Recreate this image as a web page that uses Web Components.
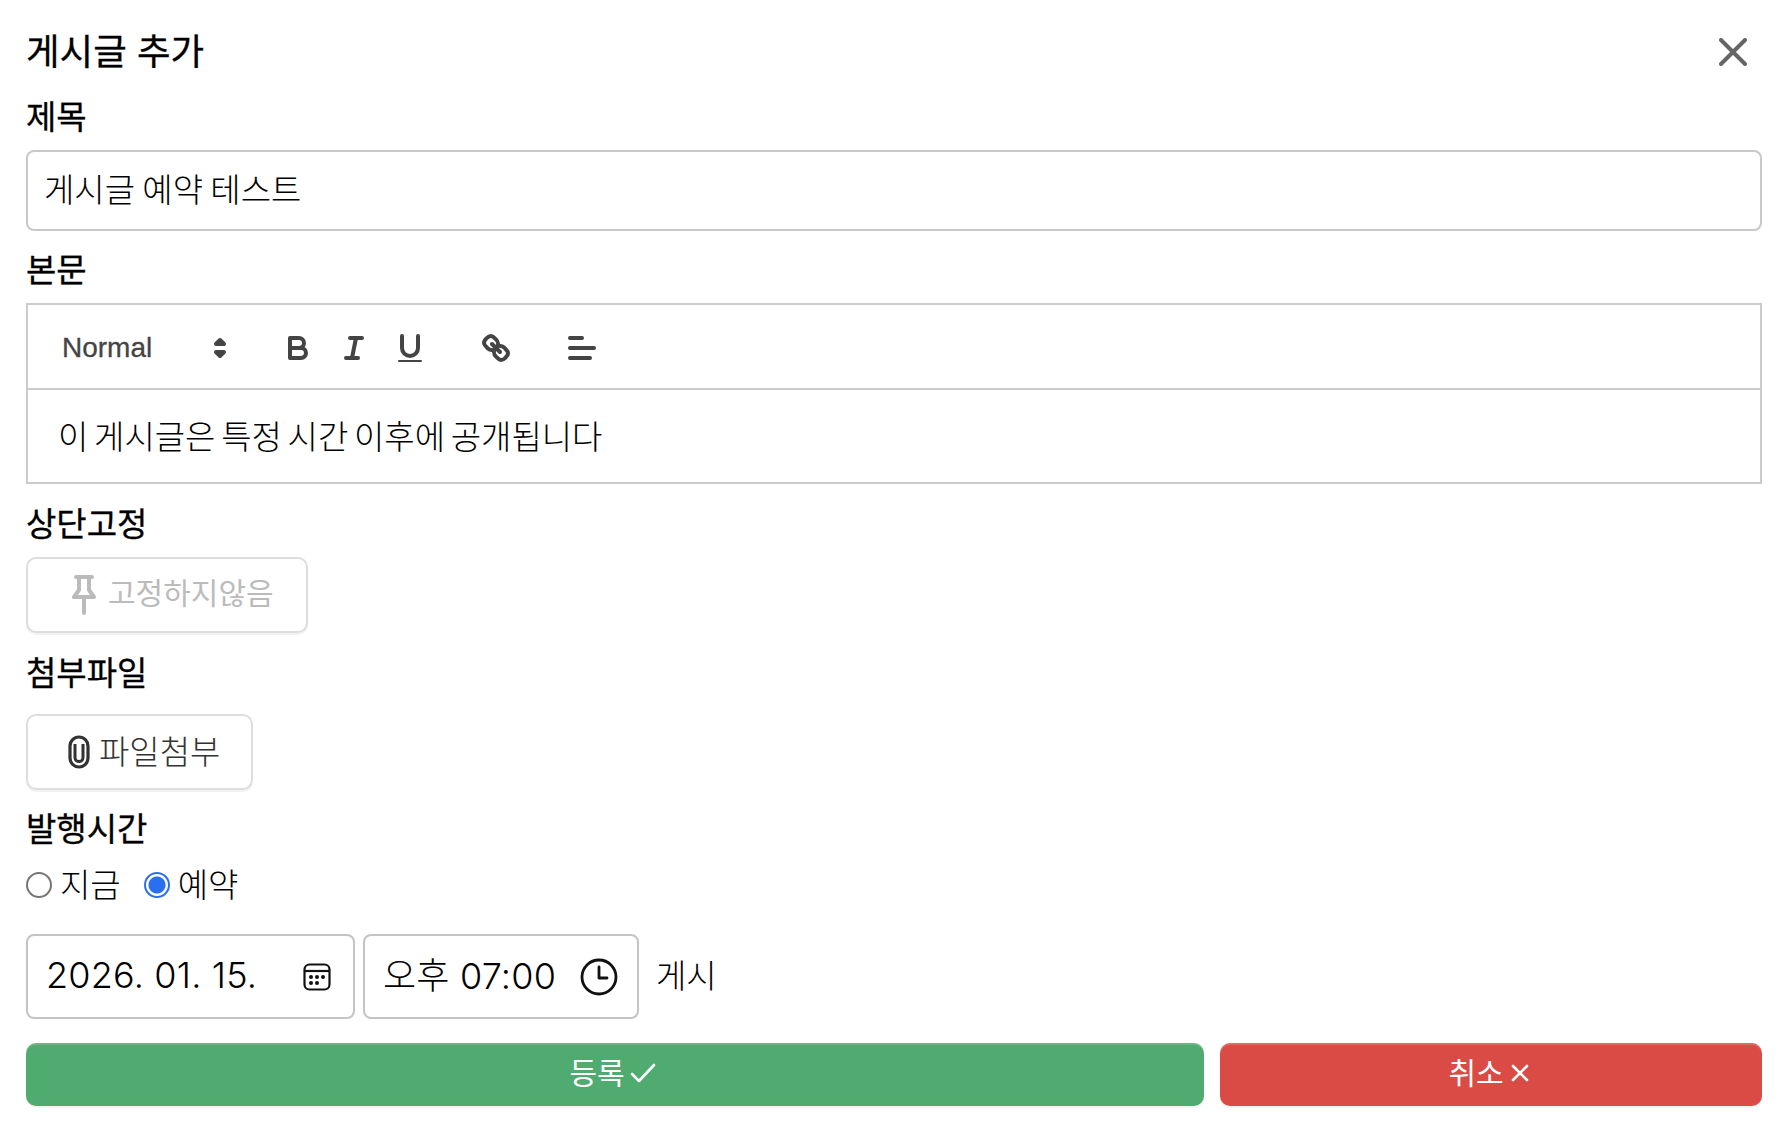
<!DOCTYPE html>
<html lang="ko">
<head>
<meta charset="utf-8">
<title>게시글 추가</title>
<style>
    html, body{ margin: 0; background: #fff; }
    body{
        font-family: Inter, "Noto Sans CJK KR", sans-serif;
        color: #000;
    }
</style>
</head>
<body>
<post-dialog>
    <span slot="title">게시글 추가</span>

    <form-field label="제목" top="0" gap="11">
        <text-input>게시글 예약 테스트</text-input>
    </form-field>

    <form-field label="본문" top="13" gap="11">
        <rich-editor>이 게시글은 특정 시간 이후에 공개됩니다</rich-editor>
    </form-field>

    <form-field label="상단고정" top="14" gap="11">
        <soft-button icon="pin" disabled>고정하지않음</soft-button>
    </form-field>

    <form-field label="첨부파일" top="14" gap="19">
        <soft-button icon="clip">파일첨부</soft-button>
    </form-field>

    <form-field label="발행시간" top="13" gap="10">
        <publish-time></publish-time>
    </form-field>

    <action-bar></action-bar>
</post-dialog>

<script>
class PostDialog extends HTMLElement{
    constructor(){
        super();
        this.shadow = this.attachShadow({mode: 'open'});
        this.shadow.innerHTML = `
        <style>
            :host{
                display: block;
                padding: 26px 22px 18px 26px;
            }
            header{
                display: flex;
                justify-content: space-between;
                align-items: center;
                height: 48px;
                margin-bottom: 17px;
                font-size: 36.5px;
                font-weight: 400;
                -webkit-text-stroke: .3px #000;
                line-height: 48px;
            }
            slot[name="title"]{
                display: block;
                padding-top: 4px;
            }
            button{
                display: flex;
                padding: 0;
                margin: 4px 15px 0 0;
                border: none;
                background: none;
            }
        </style>
        <header>
            <slot name="title"></slot>
            <button aria-label="close">
                <svg width="28" height="28" viewBox="0 0 28 28">
                    <path d="M2 2L26 26M26 2L2 26" stroke="#666" stroke-width="4" stroke-linecap="round"/>
                </svg>
            </button>
        </header>
        <slot></slot>`;
    }
}

class FormField extends HTMLElement{
    constructor(){
        super();
        this.shadow = this.attachShadow({mode: 'open'});
    }
    connectedCallback(){
        this.shadow.innerHTML = `
        <style>
            :host{
                display: block;
                margin-top: ${this.getAttribute('top')}px;
            }
            label{
                display: block;
                height: 48px;
                margin-bottom: ${this.getAttribute('gap')}px;
                font-size: 33px;
                font-weight: 400;
                -webkit-text-stroke: .3px #000;
                line-height: 52px;
            }
        </style>
        <label>${this.getAttribute('label')}</label>
        <slot></slot>`;
    }
}

class TextInput extends HTMLElement{
    constructor(){
        super();
        this.shadow = this.attachShadow({mode: 'open'});
        this.shadow.innerHTML = `
        <style>
            :host{
                display: flex;
                align-items: center;
                box-sizing: border-box;
                height: 81px;
                padding: 0 16px 6px;
                border: 2px solid #c8c8c8;
                border-radius: 8px;
                font-size: 33px;
                font-weight: 300;
                word-spacing: -2px;
            }
        </style>
        <slot></slot>`;
    }
}

class RichEditor extends HTMLElement{
    constructor(){
        super();
        this.shadow = this.attachShadow({mode: 'open'});
        this.shadow.innerHTML = `
        <style>
            :host{
                display: block;
                border: 2px solid #ccc;
                font-family: "Liberation Sans", "Noto Sans CJK KR", sans-serif;
            }
            .toolbar{
                display: flex;
                align-items: center;
                height: 80px;
                padding: 3px 16px 0;
                border-bottom: 2px solid #ccc;
                color: #444;
            }
            .picker{
                display: flex;
                align-items: center;
                justify-content: space-between;
                box-sizing: border-box;
                width: 196px;
                margin-right: 30px;
                padding: 0 2px 0 18px;
                font-size: 28px;
                -webkit-text-stroke: .3px #444;
            }
            .group{
                display: flex;
                margin-right: 30px;
            }
            .tool{
                display: block;
                width: 36px;
                height: 36px;
                padding: 6px 10px;
            }
            svg{
                display: block;
                fill: none;
                stroke: #444;
                stroke-width: 2;
                stroke-linecap: round;
                stroke-linejoin: round;
            }
            .content{
                padding: 25px 30px 22px;
                font-size: 33px;
                font-weight: 300;
                word-spacing: -3.5px;
                line-height: 45.4px;
            }
        </style>
        <div class="toolbar">
            <span class="picker">Normal
                <svg width="36" height="36" viewBox="0 0 18 18">
                    <polygon fill="#444" points="7 11 9 13 11 11 7 11"/>
                    <polygon fill="#444" points="7 7 9 5 11 7 7 7"/>
                </svg>
            </span>
            <div class="group">
                <svg class="tool" viewBox="0 0 18 18">
                    <path d="M5,4H9.5A2.5,2.5,0,0,1,12,6.5v0A2.5,2.5,0,0,1,9.5,9H5A0,0,0,0,1,5,9V4A0,0,0,0,1,5,4Z"/>
                    <path d="M5,9h5.5A2.5,2.5,0,0,1,13,11.5v0A2.5,2.5,0,0,1,10.5,14H5a0,0,0,0,1,0,0V9A0,0,0,0,1,5,9Z"/>
                </svg>
                <svg class="tool" viewBox="0 0 18 18">
                    <line x1="7" x2="13" y1="4" y2="4"/>
                    <line x1="5" x2="11" y1="14" y2="14"/>
                    <line x1="8" x2="10" y1="14" y2="4"/>
                </svg>
                <svg class="tool" viewBox="0 0 18 18">
                    <path d="M5,3V9a4.012,4.012,0,0,0,4,4H9a4.012,4.012,0,0,0,4-4V3"/>
                    <rect fill="#444" stroke="none" height="1" rx=".5" ry=".5" width="12" x="3" y="15"/>
                </svg>
            </div>
            <div class="group">
                <svg class="tool" viewBox="0 0 18 18">
                    <line x1="7" x2="11" y1="7" y2="11"/>
                    <path d="M8.9,4.577a3.476,3.476,0,0,1,.36,4.679A3.476,3.476,0,0,1,4.577,8.9C3.185,7.5,2.035,6.4,4.217,4.217S7.5,3.185,8.9,4.577Z"/>
                    <path d="M13.423,9.1a3.476,3.476,0,0,0-4.679-.36,3.476,3.476,0,0,0,.36,4.679c1.392,1.392,2.5,2.542,4.679.36S14.815,10.5,13.423,9.1Z"/>
                </svg>
            </div>
            <div class="group">
                <svg class="tool" viewBox="0 0 18 18">
                    <line x1="3" x2="15" y1="9" y2="9"/>
                    <line x1="3" x2="13" y1="14" y2="14"/>
                    <line x1="3" x2="9" y1="4" y2="4"/>
                </svg>
            </div>
        </div>
        <div class="content"><slot></slot></div>`;
    }
}

class SoftButton extends HTMLElement{
    constructor(){
        super();
        this.shadow = this.attachShadow({mode: 'open'});
    }
    connectedCallback(){
        let pin = `
            <svg width="24" height="40" viewBox="0 0 24 40">
                <path d="M4 2H20M7 2V15L2 22H22L17 15V2M12 22V38" fill="none" stroke="currentColor" stroke-width="4" stroke-linecap="round" stroke-linejoin="round"/>
            </svg>`;
        let clip = `
            <svg width="24" height="34" viewBox="0 0 24 34">
                <path d="M3 11A9 9 0 0 1 21 11V23A9 9 0 0 1 3 23Z" fill="none" stroke="currentColor" stroke-width="3.2"/>
                <path d="M8 9V22.5A4 4 0 0 0 16 22.5V9" fill="none" stroke="currentColor" stroke-width="3"/>
            </svg>`;
        let disabled = this.hasAttribute('disabled');
        this.shadow.innerHTML = `
        <style>
            :host{
                display: flex;
                align-items: center;
                box-sizing: border-box;
                width: max-content;
                height: 76px;
                padding: 0 ${disabled ? 32 : 31}px 0 ${disabled ? 44 : 39}px;
                gap: ${disabled ? 12 : 8}px;
                border: 2px solid #ddd;
                border-radius: 10px;
                box-shadow: 0 2px 0 #f2f2f2;
                color: ${disabled ? '#bbb' : '#333'};
                font-size: ${disabled ? 30 : 33}px;
                font-weight: ${disabled ? 400 : 300};
            }
            svg{
                flex: none;
            }
            span{
                padding-bottom: ${disabled ? 8 : 4}px;
            }
        </style>
        ${this.getAttribute('icon') == 'pin' ? pin : clip}
        <span><slot></slot></span>`;
    }
}

class RadioOption extends HTMLElement{
    constructor(){
        super();
        this.shadow = this.attachShadow({mode: 'open'});
        this.shadow.innerHTML = `
        <style>
            :host{
                display: flex;
                align-items: center;
                gap: 8px;
                font-size: 33px;
                font-weight: 300;
                line-height: 48px;
            }
            .dot{
                box-sizing: border-box;
                width: 26px;
                height: 26px;
                border: 2px solid #767676;
                border-radius: 50%;
                background: #fff;
            }
            :host([checked]) .dot{
                border-color: #2a6ff0;
                background: radial-gradient(circle, #2a6ff0 0 8px, #fff 9px);
            }
        </style>
        <span class="dot"></span>
        <slot></slot>`;
    }
}

class PublishTime extends HTMLElement{
    constructor(){
        super();
        this.shadow = this.attachShadow({mode: 'open'});
        this.shadow.innerHTML = `
        <style>
            :host{
                display: block;
                font-size: 36px;
                font-weight: 300;
            }
            .radios{
                display: flex;
                gap: 23px;
                margin-bottom: 25px;
            }
            .row{
                display: flex;
                align-items: center;
                gap: 8px;
            }
            .box{
                display: flex;
                align-items: center;
                justify-content: space-between;
                box-sizing: border-box;
                height: 85px;
                padding: 0 20px 0 18px;
                border: 2px solid #c4c4c4;
                border-radius: 8px;
                letter-spacing: .2px;
            }
            .box span{
                padding-bottom: 4px;
            }
            .date{ width: 329px; padding-right: 22px; }
            .time{ width: 276px; padding-right: 19px; }
            .time span{ padding-bottom: 7px; }
            .note{
                margin-left: 9px;
                padding-bottom: 6px;
                font-size: 33px;
            }
            svg{
                display: block;
                flex: none;
                fill: none;
                stroke: #111;
            }
        </style>
        <div class="radios">
            <radio-option>지금</radio-option>
            <radio-option checked>예약</radio-option>
        </div>
        <div class="row">
            <div class="box date">
                <span>2026. 01. 15.</span>
                <svg width="28" height="28" viewBox="0 0 28 28" stroke-width="2.2">
                    <rect x="1.5" y="1.5" width="25" height="25" rx="5"/>
                    <path d="M2 8H26"/>
                    <g fill="#111" stroke="none">
                        <circle cx="8" cy="14" r="2"/><circle cx="14" cy="14" r="2"/><circle cx="20" cy="14" r="2"/>
                        <circle cx="8" cy="20" r="2"/><circle cx="14" cy="20" r="2"/>
                    </g>
                </svg>
            </div>
            <div class="box time">
                <span>오후 07:00</span>
                <svg width="38" height="38" viewBox="0 0 38 38" stroke-width="2.8">
                    <circle cx="19" cy="19" r="17"/>
                    <path d="M19 9V20H27" stroke-linecap="round" stroke-linejoin="round"/>
                </svg>
            </div>
            <span class="note">게시</span>
        </div>`;
    }
}

class ActionBar extends HTMLElement{
    constructor(){
        super();
        this.shadow = this.attachShadow({mode: 'open'});
        this.shadow.innerHTML = `
        <style>
            :host{
                display: flex;
                gap: 16px;
                margin-top: 24px;
                color: #fff;
                font-size: 30px;
            }
            div{
                display: flex;
                align-items: center;
                justify-content: center;
                box-sizing: border-box;
                gap: 5px;
                height: 63px;
                padding: 0 5px 7px 0;
                border-radius: 10px;
                box-shadow: inset 0 2px 0 rgba(255,255,255,.16), 0 2px 0 #f4f4f4;
            }
            .save{ width: 1178px; background: #4fab6f; }
            .cancel{ flex: 1; background: #da4b45; padding-right: 4px; gap: 6px; }
            svg{
                margin-top: 3px;
                fill: none;
                stroke: #fff;
                stroke-width: 2.6;
                stroke-linecap: round;
                stroke-linejoin: round;
            }
        </style>
        <div class="save">등록
            <svg width="26" height="22" viewBox="0 0 26 22"><path d="M2 12L9 19L24 3"/></svg>
        </div>
        <div class="cancel">취소
            <svg width="20" height="20" viewBox="0 0 20 20"><path d="M3 3L17 17M17 3L3 17"/></svg>
        </div>`;
    }
}

customElements.define('post-dialog', PostDialog);
customElements.define('form-field', FormField);
customElements.define('text-input', TextInput);
customElements.define('rich-editor', RichEditor);
customElements.define('soft-button', SoftButton);
customElements.define('radio-option', RadioOption);
customElements.define('publish-time', PublishTime);
customElements.define('action-bar', ActionBar);
</script>
</body>
</html>
